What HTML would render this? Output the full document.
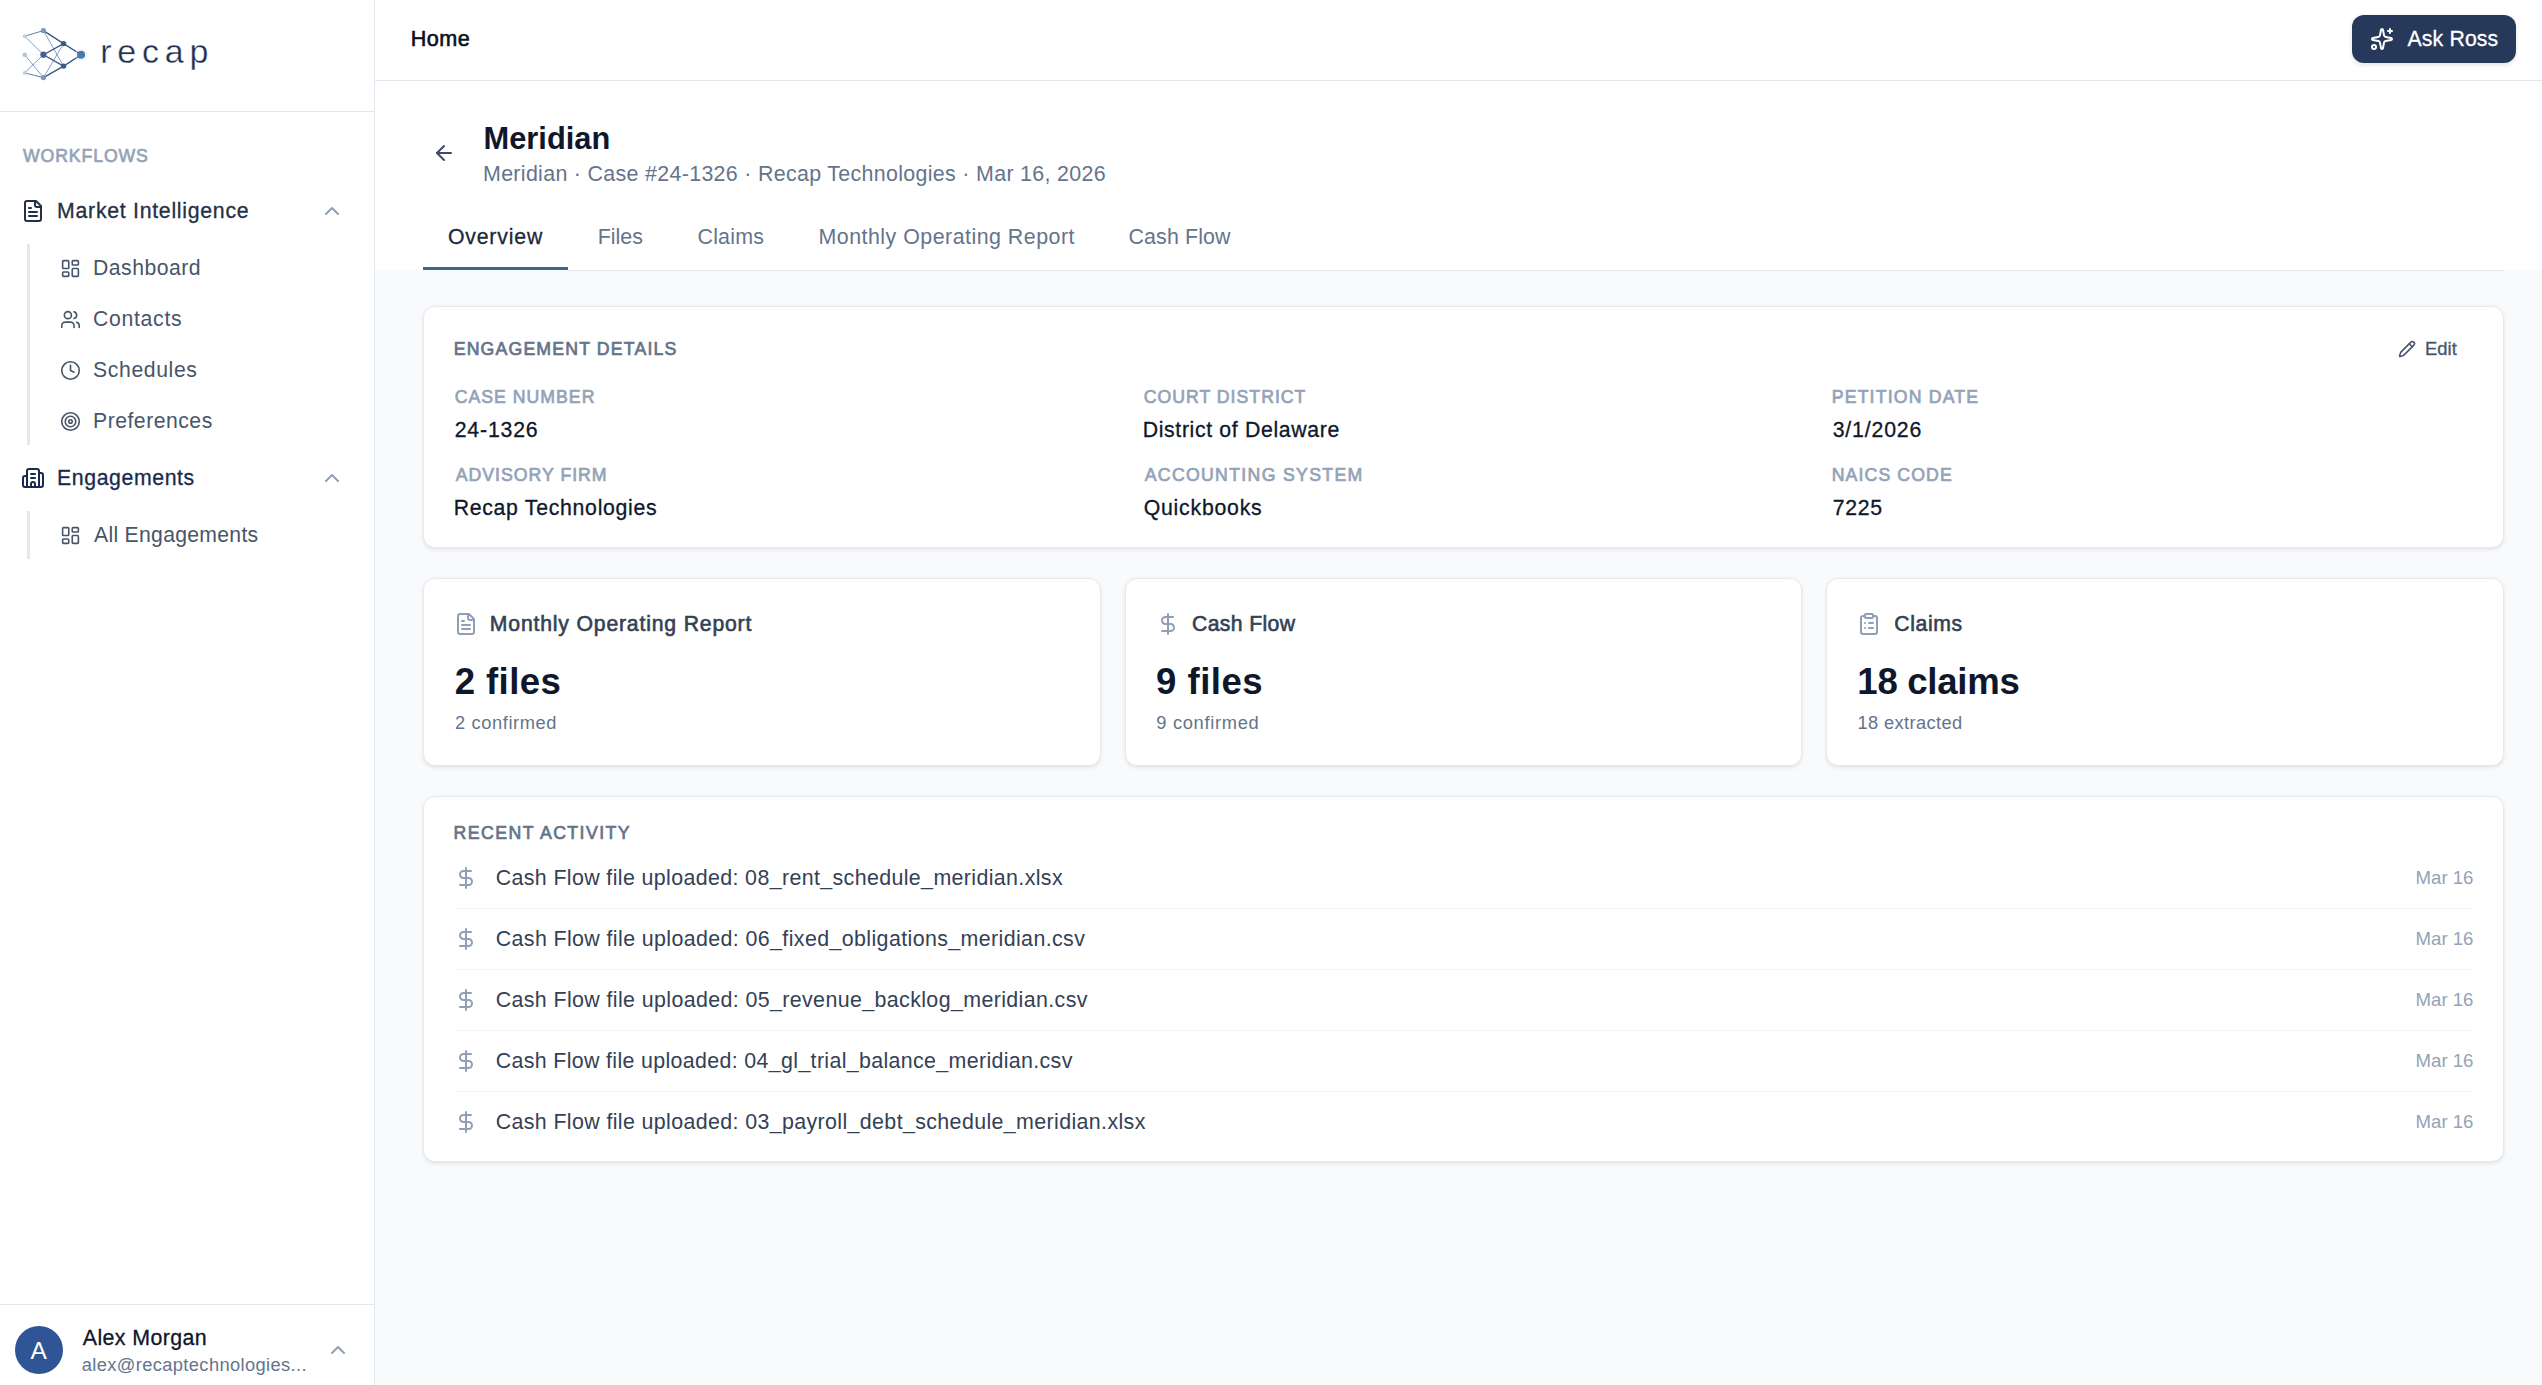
<!DOCTYPE html>
<html lang="en"><head><meta charset="utf-8"><title>Meridian · Recap</title>
<meta name="viewport" content="width=2542">
<style>
*{box-sizing:border-box;margin:0;padding:0}
html,body{width:2542px;height:1385px;overflow:hidden;background:#f9fafb;font-family:"Liberation Sans", sans-serif}
#app{position:relative;width:2542px;height:1385px;overflow:hidden}
aside{position:absolute;left:0;top:0;width:375px;height:1385px;background:#fff;border-right:1px solid #e2e8f0}
header{position:absolute;left:375px;top:0;width:2167px;height:81px;background:#fff;border-bottom:1px solid #e2e8f0}
.pagehead{position:absolute;left:375px;top:81px;width:2167px;height:189px;background:#fff}
main{position:absolute;left:0;top:0;width:2542px;height:1385px}
.t{position:absolute;white-space:nowrap;line-height:1;font-weight:400;font-family:"Liberation Sans", sans-serif}
.ic{position:absolute;display:block;overflow:visible}
.hl{position:absolute;height:1px;background:#e2e8f0}
.hl2{position:absolute;height:1px;background:#f1f5f9}
.vl{position:absolute;width:3px;background:#e2e8f0}
.ul{position:absolute;height:3px;background:#42638d}
.av{position:absolute;width:48px;height:48px;border-radius:50%;background:#2f5597}
.btn{position:absolute;border-radius:12px;background:#27395a;box-shadow:0 1.5px 4px rgba(15,23,42,.12)}
.card{position:absolute;background:#fff;border:1px solid #e6eaf0;border-radius:12px;box-shadow:0 1.5px 4.5px rgba(15,23,42,.07),0 1.5px 3px -1.5px rgba(15,23,42,.07)}
</style></head>
<body><div id="app">
<aside></aside><header></header><div class="pagehead"></div>
<main>
<nav aria-label="Sidebar">
<svg class="ic" style="left:18px;top:24px" width="72" height="60" viewBox="18 24 72 60" aria-hidden="true">
<g stroke-linecap="round" fill="none">
<path d="M24.7 54.7H43.4" stroke="#e8edf3" stroke-width="0.6"/>
<path d="M24.7 36.2L43.4 54.7M24.7 54.7L43.4 77.6M24.7 72.9L43.4 54.7M43.4 30.6L63.6 66.1M43.4 77.6L63.6 43.6" stroke="#7394bd" stroke-width="0.9"/>
<path d="M24.7 36.2L43.4 30.6M24.7 72.9L43.4 77.6" stroke="#5f7fa8" stroke-width="1"/>
<path d="M43.4 30.6L63.6 43.6L81.1 54.7L63.6 66.1L43.4 77.6M43.4 54.7L63.6 43.6M43.4 54.7L63.6 66.1" stroke="#3b5680" stroke-width="1.3"/>
</g>
<circle cx="24.7" cy="36.2" r="2" fill="#c3cfdd"/><circle cx="24.7" cy="54.7" r="2.2" fill="#b4c2d1"/><circle cx="24.7" cy="72.9" r="2" fill="#c3cfdd"/>
<circle cx="43.4" cy="30.6" r="2.6" fill="#7f96bc"/><circle cx="43.4" cy="77.6" r="2.6" fill="#7f96bc"/>
<circle cx="43.4" cy="54.7" r="3.1" fill="#43608c"/>
<circle cx="63.6" cy="43.6" r="2.7" fill="#3d5a85"/><circle cx="63.6" cy="66.1" r="2.7" fill="#3d5a85"/>
<circle cx="81.1" cy="54.7" r="5.6" fill="none" stroke="#dfe8f2" stroke-width="0.6"/>
<circle cx="81.1" cy="54.7" r="4" fill="#4a78b3"/>
</svg>
<span class="t" id="logo" style="left:100.30px;top:34.22px;font-size:34px;color:#1e3050;letter-spacing:5.750px;-webkit-text-stroke:0.35px #fff;">recap</span>
<div class="hl" style="left:0;top:111px;width:374px"></div>
<span class="t" id="wf" style="left:23.00px;top:147.62px;font-size:17.7px;color:#94a3b8;-webkit-text-stroke:0.7px #94a3b8;letter-spacing:0.875px;">WORKFLOWS</span>
<svg class="ic" style="left:21px;top:199px" width="24" height="24" viewBox="0 0 24 24" fill="none" stroke="#243044" stroke-width="2" stroke-linecap="round" stroke-linejoin="round" aria-hidden="true"><path d="M15 2H6a2 2 0 0 0-2 2v16a2 2 0 0 0 2 2h12a2 2 0 0 0 2-2V7Z"/><path d="M14 2v4a2 2 0 0 0 2 2h4"/><path d="M10 9H8"/><path d="M16 13H8"/><path d="M16 17H8"/></svg>
<span class="t" id="mi" style="left:57.10px;top:200.61px;font-size:21.25px;color:#243044;-webkit-text-stroke:0.3px #243044;letter-spacing:0.730px;">Market Intelligence</span>
<svg class="ic" style="left:320px;top:199px" width="24" height="24" viewBox="0 0 24 24" fill="none" stroke="#909fb5" stroke-width="2" stroke-linecap="round" stroke-linejoin="round" aria-hidden="true"><path d="m18 15-6-6-6 6"/></svg>
<div class="vl" style="left:27px;top:244px;height:201px"></div>
<svg class="ic" style="left:59.6px;top:257.9px" width="21" height="21" viewBox="0 0 24 24" fill="none" stroke="#475569" stroke-width="1.85" stroke-linecap="round" stroke-linejoin="round" aria-hidden="true"><rect width="7" height="9" x="3" y="3" rx="1"/><rect width="7" height="5" x="14" y="3" rx="1"/><rect width="7" height="9" x="14" y="12" rx="1"/><rect width="7" height="5" x="3" y="16" rx="1"/></svg>
<span class="t" id="sb0" style="left:93.00px;top:257.05px;font-size:21.2px;color:#475569;letter-spacing:0.500px;">Dashboard</span>
<svg class="ic" style="left:59.6px;top:308.9px" width="21" height="21" viewBox="0 0 24 24" fill="none" stroke="#475569" stroke-width="1.85" stroke-linecap="round" stroke-linejoin="round" aria-hidden="true"><path d="M16 21v-2a4 4 0 0 0-4-4H6a4 4 0 0 0-4 4v2"/><circle cx="9" cy="7" r="4"/><path d="M22 21v-2a4 4 0 0 0-3-3.87"/><path d="M16 3.13a4 4 0 0 1 0 7.75"/></svg>
<span class="t" id="sb1" style="left:93.00px;top:308.05px;font-size:21.2px;color:#475569;letter-spacing:0.714px;">Contacts</span>
<svg class="ic" style="left:59.6px;top:359.9px" width="21" height="21" viewBox="0 0 24 24" fill="none" stroke="#475569" stroke-width="1.85" stroke-linecap="round" stroke-linejoin="round" aria-hidden="true"><circle cx="12" cy="12" r="10"/><polyline points="12 6 12 12 16 14"/></svg>
<span class="t" id="sb2" style="left:93.00px;top:359.05px;font-size:21.2px;color:#475569;letter-spacing:0.625px;">Schedules</span>
<svg class="ic" style="left:59.6px;top:410.9px" width="21" height="21" viewBox="0 0 24 24" fill="none" stroke="#475569" stroke-width="1.85" stroke-linecap="round" stroke-linejoin="round" aria-hidden="true"><circle cx="12" cy="12" r="10"/><circle cx="12" cy="12" r="6"/><circle cx="12" cy="12" r="2"/></svg>
<span class="t" id="sb3" style="left:93.00px;top:410.05px;font-size:21.2px;color:#475569;letter-spacing:0.500px;">Preferences</span>
<svg class="ic" style="left:21px;top:466px" width="24" height="24" viewBox="0 0 24 24" fill="none" stroke="#182b4e" stroke-width="2" stroke-linecap="round" stroke-linejoin="round" aria-hidden="true"><path d="M10 12h4"/><path d="M10 8h4"/><path d="M14 21v-3a2 2 0 0 0-4 0v3"/><path d="M6 10H4a2 2 0 0 0-2 2v7a2 2 0 0 0 2 2h16a2 2 0 0 0 2-2V9a2 2 0 0 0-2-2h-2"/><path d="M6 21V5a2 2 0 0 1 2-2h8a2 2 0 0 1 2 2v16"/></svg>
<span class="t" id="eng" style="left:57.10px;top:467.61px;font-size:21.25px;color:#182b4e;-webkit-text-stroke:0.3px #182b4e;letter-spacing:0.600px;">Engagements</span>
<svg class="ic" style="left:320px;top:466px" width="24" height="24" viewBox="0 0 24 24" fill="none" stroke="#909fb5" stroke-width="2" stroke-linecap="round" stroke-linejoin="round" aria-hidden="true"><path d="m18 15-6-6-6 6"/></svg>
<div class="vl" style="left:27px;top:511px;height:48px"></div>
<svg class="ic" style="left:59.6px;top:524.9px" width="21" height="21" viewBox="0 0 24 24" fill="none" stroke="#475569" stroke-width="1.85" stroke-linecap="round" stroke-linejoin="round" aria-hidden="true"><rect width="7" height="9" x="3" y="3" rx="1"/><rect width="7" height="5" x="14" y="3" rx="1"/><rect width="7" height="9" x="14" y="12" rx="1"/><rect width="7" height="5" x="3" y="16" rx="1"/></svg>
<span class="t" id="alle" style="left:94.00px;top:524.05px;font-size:21.2px;color:#475569;letter-spacing:0.286px;">All Engagements</span>
<div class="hl" style="left:0;top:1304px;width:374px"></div>
<div class="av" style="left:15px;top:1326px"></div>
<span class="t" id="avA" style="left:30.50px;top:1338.86px;font-size:24.5px;color:#ffffff;">A</span>
<span class="t" id="un" style="left:82.80px;top:1327.53px;font-size:21.35px;color:#0f172a;-webkit-text-stroke:0.3px #0f172a;letter-spacing:0.400px;">Alex Morgan</span>
<span class="t" id="ue" style="left:81.80px;top:1355.51px;font-size:18.3px;color:#64748b;letter-spacing:0.375px;">alex@recaptechnologies...</span>
<svg class="ic" style="left:326px;top:1337.5px" width="24" height="24" viewBox="0 0 24 24" fill="none" stroke="#909fb5" stroke-width="2" stroke-linecap="round" stroke-linejoin="round" aria-hidden="true"><path d="m18 15-6-6-6 6"/></svg>
</nav>
<section aria-label="Content">
<span class="t" id="home" style="left:410.80px;top:28.32px;font-size:21.6px;color:#0a1020;-webkit-text-stroke:0.6px #0a1020;letter-spacing:0.462px;">Home</span>
<div class="btn" style="left:2352px;top:15px;width:164px;height:48px"></div>
<svg class="ic" style="left:2370px;top:27px" width="24" height="24" viewBox="0 0 24 24" fill="none" stroke="#ffffff" stroke-width="2" stroke-linecap="round" stroke-linejoin="round" aria-hidden="true"><path d="M11.017 2.814a1 1 0 0 1 1.966 0l1.051 5.558a2 2 0 0 0 1.594 1.594l5.558 1.051a1 1 0 0 1 0 1.966l-5.558 1.051a2 2 0 0 0-1.594 1.594l-1.051 5.558a1 1 0 0 1-1.966 0l-1.051-5.558a2 2 0 0 0-1.594-1.594l-5.558-1.051a1 1 0 0 1 0-1.966l5.558-1.051a2 2 0 0 0 1.594-1.594z"/><path d="M20 2v4"/><path d="M22 4h-4"/><circle cx="4" cy="20" r="2"/></svg>
<span class="t" id="ask" style="left:2407.50px;top:29.21px;font-size:21.25px;color:#ffffff;-webkit-text-stroke:0.3px #ffffff;letter-spacing:0.144px;">Ask Ross</span>
<svg class="ic" style="left:432px;top:141px" width="24" height="24" viewBox="0 0 24 24" fill="none" stroke="#3f4b5f" stroke-width="2" stroke-linecap="round" stroke-linejoin="round" aria-hidden="true"><path d="m12 19-7-7 7-7"/><path d="M19 12H5"/></svg>
<h1 class="t" id="title" style="left:483.50px;top:123.53px;font-size:30.8px;color:#0f172a;font-weight:700;letter-spacing:0.023px;">Meridian</h1>
<span class="t" id="sub" style="left:483.00px;top:164.08px;font-size:21.4px;color:#64748b;letter-spacing:0.322px;">Meridian · Case #24-1326 · Recap Technologies · Mar 16, 2026</span>
<span class="t" id="tab0" style="left:447.90px;top:227.21px;font-size:21.25px;color:#1e293b;-webkit-text-stroke:0.3px #1e293b;letter-spacing:0.835px;">Overview</span>
<span class="t" id="tab1" style="left:597.70px;top:227.08px;font-size:21.4px;color:#64748b;">Files</span>
<span class="t" id="tab2" style="left:697.50px;top:227.08px;font-size:21.4px;color:#64748b;letter-spacing:0.200px;">Claims</span>
<span class="t" id="tab3" style="left:818.50px;top:227.08px;font-size:21.4px;color:#64748b;letter-spacing:0.478px;">Monthly Operating Report</span>
<span class="t" id="tab4" style="left:1128.50px;top:227.08px;font-size:21.4px;color:#64748b;letter-spacing:0.117px;">Cash Flow</span>
<div class="hl" style="left:568px;top:270px;width:1936px"></div>
<div class="ul" style="left:423px;top:267px;width:145px"></div>
<div class="card" style="left:423px;top:306px;width:2081px;height:242px"></div>
<h2 class="t" id="ed" style="left:453.70px;top:340.62px;font-size:17.7px;color:#64748b;-webkit-text-stroke:0.7px #64748b;letter-spacing:1.163px;">ENGAGEMENT DETAILS</h2>
<svg class="ic" style="left:2398px;top:340px" width="18" height="18" viewBox="0 0 24 24" fill="none" stroke="#475569" stroke-width="2" stroke-linecap="round" stroke-linejoin="round" aria-hidden="true"><path d="M21.174 6.812a1 1 0 0 0-3.986-3.987L3.842 16.174a2 2 0 0 0-.5.83l-1.321 4.352a.5.5 0 0 0 .623.622l4.353-1.32a2 2 0 0 0 .83-.497z"/><path d="m15 5 4 4"/></svg>
<span class="t" id="edit" style="left:2425.00px;top:339.98px;font-size:18.45px;color:#475569;-webkit-text-stroke:0.3px #475569;letter-spacing:0.024px;">Edit</span>
<span class="t" id="lb0" style="left:454.70px;top:388.62px;font-size:17.7px;color:#94a3b8;-webkit-text-stroke:0.7px #94a3b8;letter-spacing:1.000px;">CASE NUMBER</span>
<span class="t" id="vl0" style="left:454.70px;top:420.21px;font-size:21.25px;color:#0f172a;-webkit-text-stroke:0.3px #0f172a;letter-spacing:0.832px;">24-1326</span>
<span class="t" id="lb1" style="left:1143.70px;top:388.62px;font-size:17.7px;color:#94a3b8;-webkit-text-stroke:0.7px #94a3b8;letter-spacing:1.001px;">COURT DISTRICT</span>
<span class="t" id="vl1" style="left:1142.70px;top:420.21px;font-size:21.25px;color:#0f172a;-webkit-text-stroke:0.3px #0f172a;letter-spacing:0.648px;">District of Delaware</span>
<span class="t" id="lb2" style="left:1831.70px;top:388.62px;font-size:17.7px;color:#94a3b8;-webkit-text-stroke:0.7px #94a3b8;letter-spacing:1.175px;">PETITION DATE</span>
<span class="t" id="vl2" style="left:1832.70px;top:420.21px;font-size:21.25px;color:#0f172a;-webkit-text-stroke:0.3px #0f172a;letter-spacing:0.851px;">3/1/2026</span>
<span class="t" id="lb3" style="left:455.70px;top:466.62px;font-size:17.7px;color:#94a3b8;-webkit-text-stroke:0.7px #94a3b8;letter-spacing:1.001px;">ADVISORY FIRM</span>
<span class="t" id="vl3" style="left:453.70px;top:498.21px;font-size:21.25px;color:#0f172a;-webkit-text-stroke:0.3px #0f172a;letter-spacing:0.706px;">Recap Technologies</span>
<span class="t" id="lb4" style="left:1144.70px;top:466.62px;font-size:17.7px;color:#94a3b8;-webkit-text-stroke:0.7px #94a3b8;letter-spacing:1.312px;">ACCOUNTING SYSTEM</span>
<span class="t" id="vl4" style="left:1143.70px;top:498.21px;font-size:21.25px;color:#0f172a;-webkit-text-stroke:0.3px #0f172a;letter-spacing:0.779px;">Quickbooks</span>
<span class="t" id="lb5" style="left:1831.70px;top:466.62px;font-size:17.7px;color:#94a3b8;-webkit-text-stroke:0.7px #94a3b8;letter-spacing:1.111px;">NAICS CODE</span>
<span class="t" id="vl5" style="left:1832.70px;top:498.21px;font-size:21.25px;color:#0f172a;-webkit-text-stroke:0.3px #0f172a;letter-spacing:0.669px;">7225</span>
<div class="card" style="left:423.00px;top:578px;width:677.67px;height:188px"></div>
<svg class="ic" style="left:454.0px;top:612px" width="24" height="24" viewBox="0 0 24 24" fill="none" stroke="#909fb5" stroke-width="2" stroke-linecap="round" stroke-linejoin="round" aria-hidden="true"><path d="M15 2H6a2 2 0 0 0-2 2v16a2 2 0 0 0 2 2h12a2 2 0 0 0 2-2V7Z"/><path d="M14 2v4a2 2 0 0 0 2 2h4"/><path d="M10 9H8"/><path d="M16 13H8"/><path d="M16 17H8"/></svg>
<span class="t" id="sl0" style="left:489.80px;top:613.05px;font-size:21.2px;color:#334155;-webkit-text-stroke:0.6px #334155;letter-spacing:0.825px;">Monthly Operating Report</span>
<span class="t" id="sn0" style="left:454.80px;top:663.62px;font-size:36.6px;color:#0f172a;font-weight:700;letter-spacing:0.373px;">2 files</span>
<span class="t" id="ss0" style="left:455.00px;top:713.51px;font-size:18.3px;color:#64748b;letter-spacing:0.600px;">2 confirmed</span>
<div class="card" style="left:1124.67px;top:578px;width:677.67px;height:188px"></div>
<svg class="ic" style="left:1155.67px;top:612px" width="24" height="24" viewBox="0 0 24 24" fill="none" stroke="#909fb5" stroke-width="2" stroke-linecap="round" stroke-linejoin="round" aria-hidden="true"><line x1="12" x2="12" y1="2" y2="22"/><path d="M17 5H9.5a3.5 3.5 0 0 0 0 7h5a3.5 3.5 0 0 1 0 7H6"/></svg>
<span class="t" id="sl1" style="left:1192.07px;top:613.05px;font-size:21.2px;color:#334155;-webkit-text-stroke:0.6px #334155;letter-spacing:0.358px;">Cash Flow</span>
<span class="t" id="sn1" style="left:1156.07px;top:663.62px;font-size:36.6px;color:#0f172a;font-weight:700;letter-spacing:0.479px;">9 files</span>
<span class="t" id="ss1" style="left:1156.27px;top:713.51px;font-size:18.3px;color:#64748b;letter-spacing:0.700px;">9 confirmed</span>
<div class="card" style="left:1826.34px;top:578px;width:677.67px;height:188px"></div>
<svg class="ic" style="left:1857.34px;top:612px" width="24" height="24" viewBox="0 0 24 24" fill="none" stroke="#909fb5" stroke-width="2" stroke-linecap="round" stroke-linejoin="round" aria-hidden="true"><rect width="8" height="4" x="8" y="2" rx="1" ry="1"/><path d="M16 4h2a2 2 0 0 1 2 2v14a2 2 0 0 1-2 2H6a2 2 0 0 1-2-2V6a2 2 0 0 1 2-2h2"/><path d="M12 11h4"/><path d="M12 16h4"/><path d="M8 11h.01"/><path d="M8 16h.01"/></svg>
<span class="t" id="sl2" style="left:1894.34px;top:613.05px;font-size:21.2px;color:#334155;-webkit-text-stroke:0.6px #334155;letter-spacing:0.600px;">Claims</span>
<span class="t" id="sn2" style="left:1857.34px;top:663.62px;font-size:36.6px;color:#0f172a;font-weight:700;letter-spacing:-0.292px;">18 claims</span>
<span class="t" id="ss2" style="left:1857.54px;top:713.51px;font-size:18.3px;color:#64748b;letter-spacing:0.370px;">18 extracted</span>
<div class="card" style="left:423px;top:796px;width:2081px;height:366px"></div>
<h2 class="t" id="ra" style="left:453.60px;top:824.62px;font-size:17.7px;color:#64748b;-webkit-text-stroke:0.7px #64748b;letter-spacing:1.429px;">RECENT ACTIVITY</h2>
<svg class="ic" style="left:454px;top:866.1px" width="24" height="24" viewBox="0 0 24 24" fill="none" stroke="#909fb5" stroke-width="2" stroke-linecap="round" stroke-linejoin="round" aria-hidden="true"><line x1="12" x2="12" y1="2" y2="22"/><path d="M17 5H9.5a3.5 3.5 0 0 0 0 7h5a3.5 3.5 0 0 1 0 7H6"/></svg>
<span class="t" id="ac0" style="left:495.70px;top:868.08px;font-size:21.4px;color:#334155;letter-spacing:0.370px;">Cash Flow file uploaded: 08_rent_schedule_meridian.xlsx</span>
<span class="t" id="ad0" style="left:2415.60px;top:868.86px;font-size:18.6px;color:#94a3b8;">Mar 16</span>
<div class="hl2" style="left:454px;top:908px;width:2019px"></div>
<svg class="ic" style="left:454px;top:927.1px" width="24" height="24" viewBox="0 0 24 24" fill="none" stroke="#909fb5" stroke-width="2" stroke-linecap="round" stroke-linejoin="round" aria-hidden="true"><line x1="12" x2="12" y1="2" y2="22"/><path d="M17 5H9.5a3.5 3.5 0 0 0 0 7h5a3.5 3.5 0 0 1 0 7H6"/></svg>
<span class="t" id="ac1" style="left:495.70px;top:929.08px;font-size:21.4px;color:#334155;letter-spacing:0.386px;">Cash Flow file uploaded: 06_fixed_obligations_meridian.csv</span>
<span class="t" id="ad1" style="left:2415.60px;top:929.86px;font-size:18.6px;color:#94a3b8;">Mar 16</span>
<div class="hl2" style="left:454px;top:969px;width:2019px"></div>
<svg class="ic" style="left:454px;top:988.1px" width="24" height="24" viewBox="0 0 24 24" fill="none" stroke="#909fb5" stroke-width="2" stroke-linecap="round" stroke-linejoin="round" aria-hidden="true"><line x1="12" x2="12" y1="2" y2="22"/><path d="M17 5H9.5a3.5 3.5 0 0 0 0 7h5a3.5 3.5 0 0 1 0 7H6"/></svg>
<span class="t" id="ac2" style="left:495.70px;top:990.08px;font-size:21.4px;color:#334155;letter-spacing:0.382px;">Cash Flow file uploaded: 05_revenue_backlog_meridian.csv</span>
<span class="t" id="ad2" style="left:2415.60px;top:990.86px;font-size:18.6px;color:#94a3b8;">Mar 16</span>
<div class="hl2" style="left:454px;top:1030px;width:2019px"></div>
<svg class="ic" style="left:454px;top:1049.1px" width="24" height="24" viewBox="0 0 24 24" fill="none" stroke="#909fb5" stroke-width="2" stroke-linecap="round" stroke-linejoin="round" aria-hidden="true"><line x1="12" x2="12" y1="2" y2="22"/><path d="M17 5H9.5a3.5 3.5 0 0 0 0 7h5a3.5 3.5 0 0 1 0 7H6"/></svg>
<span class="t" id="ac3" style="left:495.70px;top:1051.08px;font-size:21.4px;color:#334155;letter-spacing:0.339px;">Cash Flow file uploaded: 04_gl_trial_balance_meridian.csv</span>
<span class="t" id="ad3" style="left:2415.60px;top:1051.86px;font-size:18.6px;color:#94a3b8;">Mar 16</span>
<div class="hl2" style="left:454px;top:1091px;width:2019px"></div>
<svg class="ic" style="left:454px;top:1110.1px" width="24" height="24" viewBox="0 0 24 24" fill="none" stroke="#909fb5" stroke-width="2" stroke-linecap="round" stroke-linejoin="round" aria-hidden="true"><line x1="12" x2="12" y1="2" y2="22"/><path d="M17 5H9.5a3.5 3.5 0 0 0 0 7h5a3.5 3.5 0 0 1 0 7H6"/></svg>
<span class="t" id="ac4" style="left:495.70px;top:1112.08px;font-size:21.4px;color:#334155;letter-spacing:0.371px;">Cash Flow file uploaded: 03_payroll_debt_schedule_meridian.xlsx</span>
<span class="t" id="ad4" style="left:2415.60px;top:1112.86px;font-size:18.6px;color:#94a3b8;">Mar 16</span>
</section>
</main>
</div></body></html>
